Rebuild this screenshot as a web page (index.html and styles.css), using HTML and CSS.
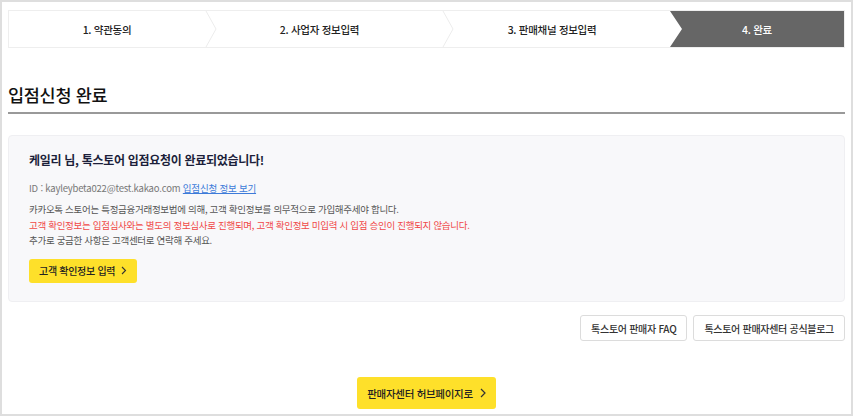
FILE: index.html
```html
<!DOCTYPE html>
<html lang="ko">
<head>
<meta charset="utf-8">
<link rel="stylesheet" href="styles.css">
</head>
<body>
<div class="frame">
  <div class="steps">
    <div class="step s1">1. 약관동의</div>
    <svg class="sep" width="12" height="36" viewBox="0 0 12 36"><polyline points="1,0 11,18 1,36" fill="none" stroke="#ececec" stroke-width="1"/></svg>
    <div class="step s2">2. 사업자 정보입력</div>
    <svg class="sep" width="12" height="36" viewBox="0 0 12 36"><polyline points="1,0 11,18 1,36" fill="none" stroke="#ececec" stroke-width="1"/></svg>
    <div class="step s3">3. 판매채널 정보입력</div>
    <div class="step s4">4. 완료</div>
  </div>

  <h1 class="title">입점신청 완료</h1>

  <div class="box">
    <h2 class="box-head">케일리 님, 톡스토어 입점요청이 완료되었습니다!</h2>
    <p class="id-line">ID : kayleybeta022@test.kakao.com <a class="link" href="#">입점신청 정보 보기</a></p>
    <div class="notes">
      <p>카카오톡 스토어는 특정금융거래정보법에 의해, 고객 확인정보를 의무적으로 가입해주세야 합니다.</p>
      <p class="warn">고객 확인정보는 입점심사와는 별도의 정보심사로 진행되며, 고객 확인정보 미입력 시 입점 승인이 진행되지 않습니다.</p>
      <p>추가로 궁금한 사항은 고객센터로 연락해 주세요.</p>
    </div>
    <button class="btn-yellow small">고객 확인정보 입력<svg class="chev" width="6" height="9" viewBox="0 0 6 9"><polyline points="1,1 4.5,4.5 1,8" fill="none" stroke="#333" stroke-width="1.1"/></svg></button>
  </div>

  <div class="links">
    <button class="btn-line">톡스토어 판매자 FAQ</button>
    <button class="btn-line">톡스토어 판매자센터 공식블로그</button>
  </div>

  <div class="bottom">
    <button class="btn-yellow big">판매자센터 허브페이지로<svg class="chev" width="6" height="10" viewBox="0 0 6 10"><polyline points="1,1 5,5 1,9" fill="none" stroke="#333" stroke-width="1.2"/></svg></button>
  </div>
</div>
</body>
</html>
```

FILE: styles.css
```css
* { box-sizing: border-box; }
html, body { margin: 0; padding: 0; background: #fff; }
body {
  font-family: "Noto Sans CJK KR", "Noto Sans", sans-serif;
  color: #333;
}
.frame {
  width: 853px;
  height: 416px;
  border: 2px solid #dedede;
  padding: 8px 6px 0 6px;
  overflow: hidden;
}
.steps {
  display: flex;
  height: 38px;
  border: 1px solid #eeeeee;
  background: #fff;
}
.step {
  display: flex;
  align-items: center;
  justify-content: center;
  font-size: 10.5px;
  font-weight: 500;
  color: #222;
  letter-spacing: -0.3px;
}
.s1 { width: 196px; }
.s2 { width: 225px; padding-right: 20px; }
.s3 { width: 216px; padding-right: 20px; }
.s4 {
  flex: 1;
  background: #666666;
  color: #fff;
  clip-path: polygon(0 0, 100% 0, 100% 100%, 0 100%, 12px 50%);
}
.sep { flex: none; display: block; }
.title {
  margin: 35px 0 0 0;
  font-size: 17.5px;
  font-weight: 500;
  color: #111;
  line-height: 24px;
  padding-bottom: 5px;
  border-bottom: 2px solid #999;
  letter-spacing: -0.3px;
}
.box {
  margin-top: 21px;
  background: #f8f8fa;
  border: 1px solid #efeff2;
  border-radius: 4px;
  padding: 15px 20px 0 20px;
  height: 167px;
}
.box-head {
  margin: 0;
  font-size: 12px;
  font-weight: 700;
  color: #1c1f3a;
  line-height: 18px;
  letter-spacing: -0.3px;
}
.id-line {
  margin: 11px 0 0 0;
  font-size: 9.5px;
  color: #777;
  line-height: 16px;
  letter-spacing: -0.2px;
}
.link { color: #3d7bd9; text-decoration: underline; }
.notes { margin-top: 6px; }
.notes p {
  margin: 0;
  font-size: 9.5px;
  line-height: 15.5px;
  color: #555;
  letter-spacing: -0.3px;
}
.notes p.warn { color: #f04848; }
.btn-yellow {
  display: inline-flex;
  align-items: center;
  gap: 6px;
  background: #fee02a;
  border: none;
  border-radius: 3px;
  font-family: inherit;
  color: #222;
  font-weight: 500;
  letter-spacing: -0.3px;
}
.btn-yellow.small {
  margin-top: 10px;
  height: 24px;
  padding: 0 10px 0 10px;
  font-size: 10px;
}
.links {
  display: flex;
  justify-content: flex-end;
  gap: 6px;
  margin-top: 13px;
}
.btn-line {
  height: 26px;
  background: #fff;
  border: 1px solid #dcdcdc;
  border-radius: 3px;
  font-family: inherit;
  font-size: 10px;
  font-weight: 500;
  color: #333;
  padding: 0 10px;
  letter-spacing: -0.3px;
}
.bottom {
  display: flex;
  justify-content: center;
  margin-top: 36px;
}
.btn-yellow.big {
  height: 32px;
  padding: 0 10px 0 10px;
  font-size: 10.5px;
  gap: 7px;
}
.chev { display: block; }
```
